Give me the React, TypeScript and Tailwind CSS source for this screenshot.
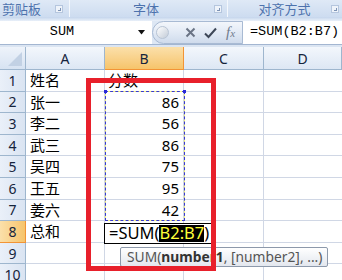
import React from 'react';

const COLS = ['A', 'B', 'C', 'D'];
const COL_W = 'grid-cols-[26px_79px_79px_80px_78px]';

const ROWS: [string, string][] = [
  ['姓名', '分数'],
  ['张一', '86'],
  ['李二', '56'],
  ['武三', '86'],
  ['吴四', '75'],
  ['王五', '95'],
  ['姜六', '42'],
  ['总和', ''],
  ['', ''],
  ['', ''],
];

const Launcher = () => (
  <span className="flex h-[8px] w-[8px] items-end justify-end border border-[#b5c6de] bg-[#eef3fa]">
    <span className="mb-[1px] mr-[1px] h-[3px] w-[3px] border-b border-r border-[#7d93b5]" />
  </span>
);

export default function App() {
  return (
    <div className="relative h-[280px] w-[342px] overflow-hidden bg-white font-['Noto_Sans','Noto_Sans_CJK_SC',sans-serif]">
      {/* ribbon group labels */}
      <div className="flex h-[17px] bg-gradient-to-b from-[#dfe9f6] to-[#cddcf0] text-[13px] leading-[17px] text-[#4d72ad] font-['Noto_Sans_CJK_SC',sans-serif]">
        <div className="flex w-[70px] items-center justify-between border-r border-[#f4f8fd] pl-[2px] pr-[6px]">
          <span>剪贴板</span>
          <Launcher />
        </div>
        <div className="flex w-[158px] items-center border-r border-[#f4f8fd] pr-[5px]">
          <span className="flex-1 pl-[8px] text-center">字体</span>
          <Launcher />
        </div>
        <div className="flex flex-1 items-center pr-[3px]">
          <span className="flex-1 pl-[10px] text-center">对齐方式</span>
          <Launcher />
        </div>
      </div>
      <div className="h-[4px] bg-gradient-to-b from-[#c4d5ec] to-[#e9f0f9]" />

      {/* formula bar */}
      <div className="flex h-[24px] border-b border-[#a3b6d1] bg-[#dde7f4] font-['Liberation_Mono',monospace] text-[13.5px]">
        <div className="flex w-[152px] items-center bg-white">
          <span className="w-[124px] text-center text-black">SUM</span>
          <svg width="8" height="5" viewBox="0 0 8 5" className="ml-[14px]">
            <path d="M0 0H7L3.5 4.5Z" fill="#111" />
          </svg>
        </div>
        <div className="flex w-[91px] items-center rounded-l-full border border-[#a8bad3] bg-gradient-to-b from-[#f3f6fb] via-[#e2eaf5] to-[#cfdbec]">
          <span className="ml-[3px] h-[13px] w-[13px] rounded-full border border-[#b8c4d4] bg-gradient-to-br from-white to-[#c3ccd8]" />
          <svg width="11" height="11" viewBox="0 0 11 11" className="ml-[16px]">
            <path d="M1.5 1.5L9.5 9.5M9.5 1.5L1.5 9.5" stroke="#6a7485" strokeWidth="2" />
          </svg>
          <svg width="13" height="12" viewBox="0 0 13 12" className="ml-[8px]">
            <path d="M1 6.5L4.5 10L12 1.5" stroke="#3d4757" strokeWidth="2" fill="none" />
          </svg>
          <span className="ml-[9px] font-['Liberation_Serif',serif] text-[15px] italic text-[#707b8c]">
            f<span className="text-[11px]">x</span>
          </span>
        </div>
        <div className="flex flex-1 items-center bg-white pl-[7px] text-black">=SUM(B2:B7)</div>
      </div>
      <div className="h-[2px] bg-[#dbe5f2]" />

      {/* sheet */}
      <div className={`grid ${COL_W} grid-rows-[23px_repeat(10,21.6px)]`}>
        <div className="relative border-b border-r border-[#9eb6ce] bg-gradient-to-b from-[#eef3fa] to-[#d7e3f2]">
          <svg width="14" height="14" viewBox="0 0 14 14" className="absolute bottom-[3px] right-[3px]">
            <path d="M14 0V14H0Z" fill="#c2d1e4" />
          </svg>
        </div>
        {COLS.map((c) => (
          <div
            key={c}
            className={
              c === 'B'
                ? 'flex items-center justify-center border-b border-r border-[#f29436] bg-gradient-to-b from-[#fbe0aa] to-[#f6c46a] text-[14px] text-[#15243c]'
                : 'flex items-center justify-center border-b border-r border-[#9eb6ce] bg-gradient-to-b from-[#f3f7fc] to-[#dde7f4] text-[14px] text-[#15243c]'
            }
          >
            {c}
          </div>
        ))}
        {ROWS.map(([name, score], i) => (
          <React.Fragment key={i}>
            <div
              className={
                i === 7
                  ? 'flex items-center justify-center border-b border-r border-[#f29436] bg-gradient-to-r from-[#fbe0aa] to-[#f6c46a] text-[14px] text-[#15243c]'
                  : 'flex items-center justify-center border-b border-r border-[#9eb6ce] bg-gradient-to-r from-[#eaf0f9] to-[#dae4f2] text-[14px] text-[#15243c]'
              }
            >
              {i + 1}
            </div>
            <div className="flex items-center border-b border-r border-[#d0d7e5] pl-[4px] font-['Noto_Sans_CJK_SC',sans-serif] text-[15px] text-black">
              {name}
            </div>
            <div
              className={
                i === 0
                  ? 'flex items-center border-b border-r border-[#d0d7e5] pl-[3px] font-["Noto_Sans_CJK_SC",sans-serif] text-[15px] text-black'
                  : 'flex items-center justify-end border-b border-r border-[#d0d7e5] pr-[4px] text-[15px] text-black'
              }
            >
              {score}
            </div>
            <div className="border-b border-r border-[#d0d7e5]" />
            <div className="border-b border-[#d0d7e5]" />
          </React.Fragment>
        ))}
      </div>

      {/* marching ants around B2:B7 */}
      <div className="absolute left-[105px] top-[91px] h-[130px] w-[80px] border border-[#f5f57a]" />
      <div className="absolute left-[105px] top-[91px] h-[130px] w-[80px] border border-dashed border-[#3a3ad0]" />
      <div className="absolute left-[104px] top-[90px] h-[3px] w-[3px] bg-[#2a2ad8]" />
      <div className="absolute left-[183px] top-[90px] h-[3px] w-[3px] bg-[#2a2ad8]" />

      {/* in-cell editor */}
      <div className="absolute left-[104px] top-[223px] flex h-[21px] w-[110px] items-center border border-black bg-white pl-[4px] text-[16.5px] leading-none text-black">
        =SUM(<span className="bg-black text-[#ffff3a]">B2:B7</span>)
      </div>

      {/* function tooltip */}
      <div className="absolute left-[120px] top-[247px] flex h-[20px] w-[208px] items-center rounded-[2px] border border-[#8d99ab] bg-gradient-to-b from-white to-[#e3e7ee] pl-[6px] text-[13.8px] text-[#555]">
        SUM(<b className="text-[#333]">number1</b>, [number2], ...)
      </div>

      {/* red annotation */}
      <div className="absolute left-[86px] top-[78px] h-[193px] w-[130px] border-[5px] border-[#e8202b]" />
    </div>
  );
}
